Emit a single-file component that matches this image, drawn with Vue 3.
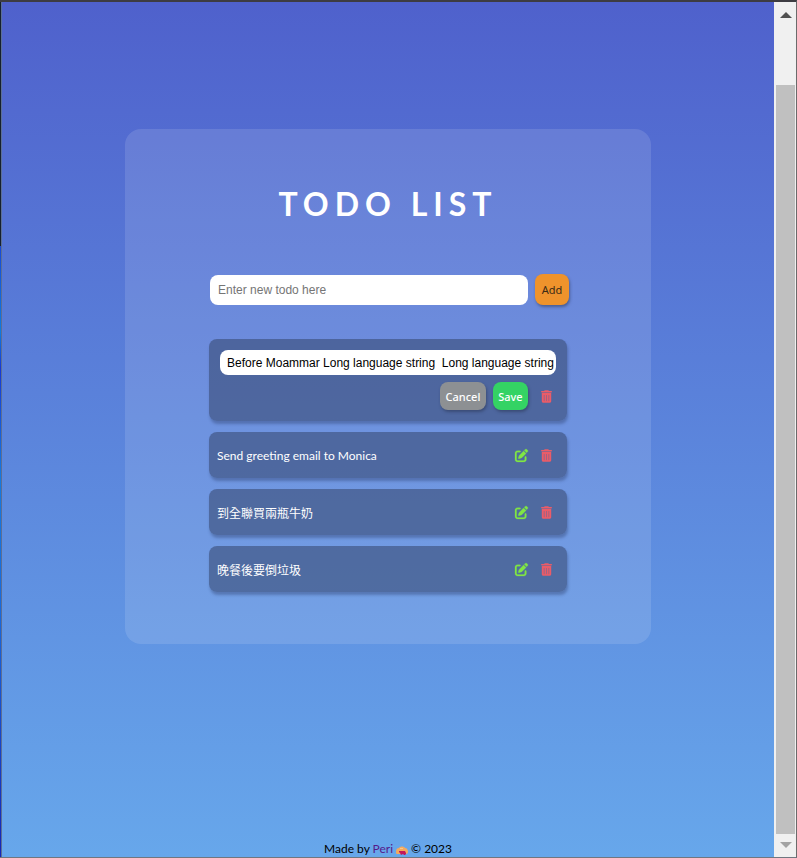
<script setup>
import { ref } from 'vue'

const newTodo = ref('')
const draft = ref('Before Moammar Long language string  Long language string')
const todos = ref([
  { id: 1, text: draft.value, editing: true },
  { id: 2, text: 'Send greeting email to Monica', editing: false },
  { id: 3, text: '到全聯買兩瓶牛奶', editing: false },
  { id: 4, text: '晚餐後要倒垃圾', editing: false },
])

function addTodo() {
  const text = newTodo.value.trim()
  if (!text) return
  todos.value.push({ id: Date.now(), text, editing: false })
  newTodo.value = ''
}
function edit(todo) {
  todos.value.forEach((t) => (t.editing = false))
  todo.editing = true
  draft.value = todo.text
}
function save(todo) {
  todo.text = draft.value
  todo.editing = false
}
function remove(todo) {
  todos.value = todos.value.filter((t) => t.id !== todo.id)
}
</script>

<template>
  <div class="window">
    <div class="edge"><div class="edge-dark"></div><div class="edge-blue"></div></div>
    <div class="page">
      <main class="card">
        <h1 class="title">TODO LIST</h1>
        <form class="add-form" @submit.prevent="addTodo">
          <input v-model="newTodo" class="field" type="text" placeholder="Enter new todo here" aria-label="New todo" />
          <button class="btn add" type="submit">Add</button>
        </form>
        <ul class="list">
          <li v-for="todo in todos" :key="todo.id" class="item" :class="{ editing: todo.editing }">
            <input v-if="todo.editing" v-model="draft" class="field edit-field" type="text" aria-label="Edit todo" />
            <span v-else class="text">{{ todo.text }}</span>
            <div class="actions">
              <template v-if="todo.editing">
                <button class="btn cancel" type="button" @click="todo.editing = false">Cancel</button>
                <button class="btn save" type="button" @click="save(todo)">Save</button>
              </template>
              <button v-else class="icon-btn pen" type="button" aria-label="Edit" @click="edit(todo)">
                <svg width="13" height="13" viewBox="0 0 512 512" aria-hidden="true">
                  <path fill="currentColor" stroke="currentColor" stroke-width="10" d="M472 22c-22-22-57-22-79 0l-31 31 97 97 31-31c22-22 22-57 0-79zM339 76 173 242c-6 6-11 14-14 22l-30 89c-3 9-1 18 6 25s16 9 25 6l89-30c8-3 16-7 22-14l166-166zM96 64c-53 0-96 43-96 96v256c0 53 43 96 96 96h256c53 0 96-43 96-96v-96c0-18-14-32-32-32s-32 14-32 32v96c0 18-14 32-32 32H96c-18 0-32-14-32-32V160c0-18 14-32 32-32h96c18 0 32-14 32-32s-14-32-32-32z" />
                </svg>
              </button>
              <button class="icon-btn trash" type="button" aria-label="Delete" @click="remove(todo)">
                <svg width="11" height="13" viewBox="0 0 448 512" aria-hidden="true">
                  <path fill="currentColor" fill-opacity="0.4" d="M90 170h268v290H90z" />
                  <path fill="currentColor" d="M135 18 128 32H32C14 32 0 46 0 64s14 32 32 32h384c18 0 32-14 32-32s-14-32-32-32h-96l-7-14C307 7 296 0 284 0H164c-12 0-23 7-29 18zM416 112H32v336c0 35 29 64 64 64h256c35 0 64-29 64-64zM144 208v224c0 9-7 16-16 16s-16-7-16-16V208c0-9 7-16 16-16s16 7 16 16zm96 0v224c0 9-7 16-16 16s-16-7-16-16V208c0-9 7-16 16-16s16 7 16 16zm96 0v224c0 9-7 16-16 16s-16-7-16-16V208c0-9 7-16 16-16s16 7 16 16z" />
                </svg>
              </button>
            </div>
          </li>
        </ul>
      </main>
      <footer class="footer">
        <span>Made by <a href="#">Peri</a></span>
        <svg width="12" height="12" viewBox="0 0 12 12" aria-hidden="true">
          <path fill="#f4a95f" d="M0 9C0 6 1 5 3 5 4 3 8 3 9 5c2 0 3 2 3 4 0 1-1 2-2 2H1C0 11 0 10 0 9z" />
          <path fill="#c2185b" d="M3 8h6l1 2v1L9 12H8l-1-1-2 1-1-2-1-1z" />
          <path fill="#f8c98c" d="M4 5h3v1H4z" />
        </svg>
        <span>© 2023</span>
      </footer>
    </div>
    <div class="scrollbar" aria-hidden="true">
      <svg class="arrow" width="12" height="6" viewBox="0 0 12 6"><path fill="#505050" d="M6 0 12 6H0z" /></svg>
      <div class="thumb"></div>
      <svg class="arrow" width="12" height="6" viewBox="0 0 12 6"><path fill="#a3a3a3" d="M0 0h12L6 6z" /></svg>
    </div>
  </div>
</template>

<style>
body {
  margin: 0;
}
</style>

<style scoped>
* {
  box-sizing: border-box;
}
.window {
  display: flex;
  min-height: 100vh;
  border-top: 2px solid #3d3c42;
  border-right: 1px solid #6b6b6b;
  border-bottom: 1px solid #707780;
  font-family: Lato, "Noto Sans CJK TC", sans-serif;
  font-size: 12px;
}
.edge {
  display: flex;
  flex-direction: column;
  width: 2px;
  border-right: 1px solid #5c6f95;
}
.edge-dark {
  flex: 2;
  background: #15202e;
}
.edge-blue {
  flex: 5;
  background: linear-gradient(#1647d8, #0d7ae0 14%, #1537d6 20%, #1479e0 38%, #1768dd 60%, #1424b8);
}
.page {
  flex: 1;
  min-width: 0;
  display: flex;
  flex-direction: column;
  align-items: center;
  padding-top: 127px;
  background: linear-gradient(#4f61cc, #67a7eb);
}
.card {
  width: calc(68% + 1px);
  display: flex;
  flex-direction: column;
  align-items: center;
  padding: 52px 84px;
  border-radius: 16px;
  background: rgba(255, 255, 255, 0.12);
}
.title {
  margin: 0 0 48px;
  color: #fff;
  font-size: 32px;
  line-height: 45px;
  font-weight: 700;
  letter-spacing: 6px;
  white-space: nowrap;
}
.add-form {
  align-self: stretch;
  display: flex;
  align-items: center;
  gap: 7px;
  margin: 0 -2px 34px 1px;
}
.field {
  flex: 1;
  min-width: 0;
  height: 30px;
  padding: 0 8px;
  border: 0;
  border-radius: 8px;
  background: #fff;
  color: #000;
  font-family: "Liberation Sans", Arial, sans-serif;
  font-size: 12px;
  outline: 0;
}
.field::placeholder {
  color: #757575;
  opacity: 1;
}
.btn {
  height: 28px;
  padding: 0;
  border: 0;
  border-radius: 8px;
  color: #fff;
  font-family: "Noto Sans", sans-serif;
  font-size: 11px;
  font-weight: 500;
  box-shadow: 1px 2px 3px rgba(40, 50, 80, 0.5);
  cursor: pointer;
}
.add {
  width: 34px;
  height: 31px;
  background: #ef932c;
  color: #3b2a16;
  font-weight: 400;
}
.cancel {
  width: 46px;
  background: #8d9093;
}
.save {
  width: 35px;
  background: #34d364;
}
.list {
  align-self: stretch;
  display: flex;
  flex-direction: column;
  gap: 11px;
  margin: 0;
  padding: 0;
  list-style: none;
}
.item {
  display: flex;
  align-items: center;
  justify-content: space-between;
  min-height: 46px;
  padding: 0 15px 0 8px;
  border-radius: 8px;
  background: rgba(56, 75, 117, 0.6);
  box-shadow: 1px 3px 3px rgba(50, 70, 120, 0.45);
  color: #fff;
}
.item.editing {
  flex-direction: column;
  align-items: stretch;
  gap: 7px;
  padding: 11px;
}
.edit-field {
  flex: none;
  height: 25px;
  padding: 0 0 0 7px;
}
.editing .actions {
  justify-content: flex-end;
  padding-right: 4px;
}
.actions {
  display: flex;
  align-items: center;
}
.btn + .btn {
  margin-left: 7px;
}
.icon-btn {
  display: flex;
  padding: 0;
  border: 0;
  background: none;
  cursor: pointer;
}
.icon-btn svg {
  overflow: visible;
}
.trash {
  margin-left: 13px;
  color: #ea5c68;
}
.pen {
  color: #80e743;
}
.footer {
  display: flex;
  align-items: center;
  gap: 3px;
  margin-top: auto;
  line-height: 16px;
  color: #000;
}
.footer a {
  color: #551a8b;
  text-decoration: none;
}
.scrollbar {
  display: flex;
  flex-direction: column;
  align-items: center;
  justify-content: space-between;
  width: 22px;
  padding: 10px 1px 9px 2px;
  background: #f0f0f0;
}
.arrow {
  flex: none;
}
.thumb {
  flex: 1;
  align-self: stretch;
  margin: 67px 0 8px;
  background: #c0c0c0;
}
</style>
